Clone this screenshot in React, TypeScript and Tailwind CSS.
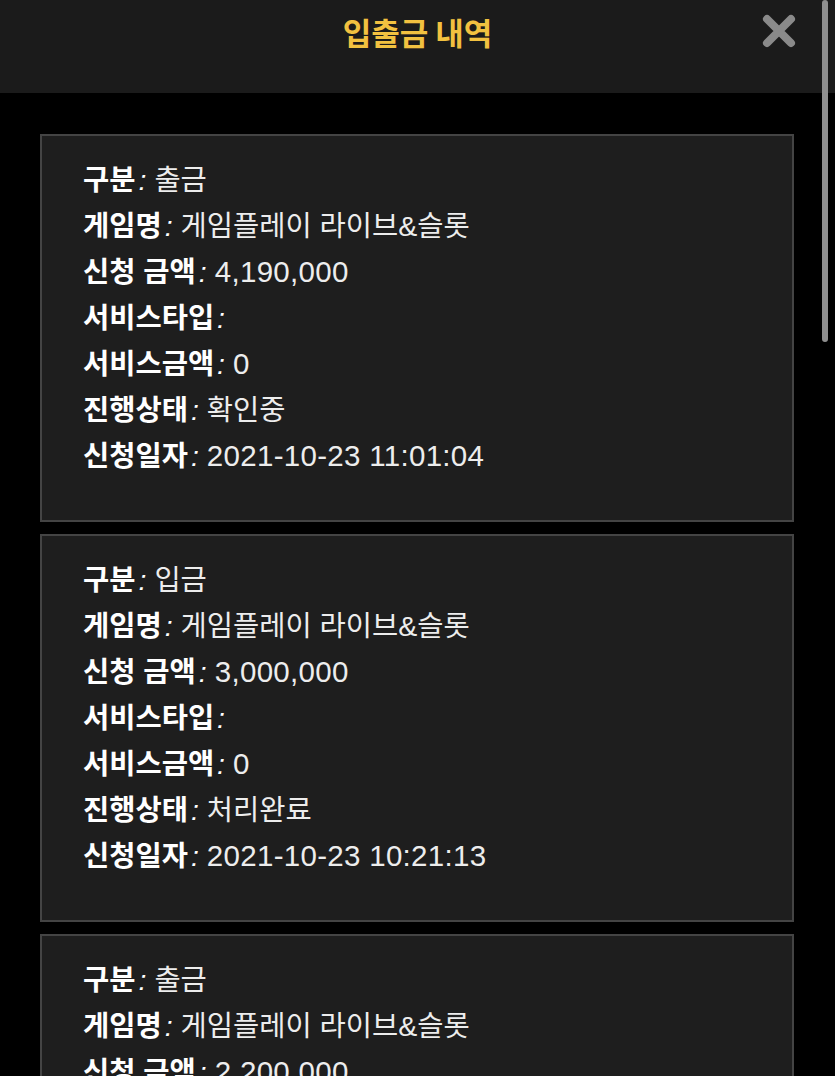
import React from "react";

interface Record {
  kind: string;
  game: string;
  amount: string;
  serviceType: string;
  serviceAmount: string;
  status: string;
  date: string;
}

const records: Record[] = [
  {
    kind: "출금",
    game: "게임플레이 라이브&슬롯",
    amount: "4,190,000",
    serviceType: "",
    serviceAmount: "0",
    status: "확인중",
    date: "2021-10-23 11:01:04",
  },
  {
    kind: "입금",
    game: "게임플레이 라이브&슬롯",
    amount: "3,000,000",
    serviceType: "",
    serviceAmount: "0",
    status: "처리완료",
    date: "2021-10-23 10:21:13",
  },
  {
    kind: "출금",
    game: "게임플레이 라이브&슬롯",
    amount: "2,200,000",
    serviceType: "",
    serviceAmount: "0",
    status: "처리완료",
    date: "2021-10-23 09:12:40",
  },
];

const Row: React.FC<{ label: string; value: string; num?: boolean }> = ({
  label,
  value,
  num,
}) => (
  <div className="h-[46px] flex items-center whitespace-nowrap">
    <span className="font-bold text-white">{label}</span>
    <span className="italic text-white ml-[3px] mr-[8px]">:</span>
    <span className={num ? "text-[#ededed] text-[29.5px] tracking-[0.3px]" : "text-[#ededed]"}>
      {value}
    </span>
  </div>
);

const RecordCard: React.FC<{ r: Record }> = ({ r }) => (
  <div className="bg-[#1e1e1e] border-2 border-[#444] pl-[41px] pt-[21px] pb-[41px]">
    <Row label="구분" value={r.kind} />
    <Row label="게임명" value={r.game} />
    <Row label="신청 금액" value={r.amount} num />
    <Row label="서비스타입" value={r.serviceType} />
    <Row label="서비스금액" value={r.serviceAmount} num />
    <Row label="진행상태" value={r.status} />
    <Row label="신청일자" value={r.date} num />
  </div>
);

export default function App() {
  return (
    <div
      className="relative w-[835px] h-[1076px] overflow-hidden bg-black text-[28.5px]"
      style={{ fontFamily: '"Liberation Sans", "Noto Sans CJK KR", sans-serif' }}
    >
      {/* Header */}
      <div className="relative h-[93px] bg-[#1b1b1b] flex justify-center pt-[10px]">
        <h1
          className="text-[31px] font-bold text-[#f2c140] leading-[44px]"
          style={{ fontFamily: '"Noto Sans CJK KR", sans-serif' }}
        >
          입출금 내역
        </h1>
        <button className="absolute right-[38px] top-[13px] w-[36px] h-[36px]">
          <svg viewBox="0 0 36 36" className="w-full h-full">
            <path
              d="M6 6 L30 30 M30 6 L6 30"
              stroke="#8a8a8a"
              strokeWidth="8"
              strokeLinecap="round"
              fill="none"
            />
          </svg>
        </button>
      </div>

      {/* List */}
      <div className="flex flex-col gap-[12px] pt-[41px] pl-[40px] pr-[41px]">
        {records.map((r, i) => (
          <RecordCard key={i} r={r} />
        ))}
      </div>

      {/* Scrollbar */}
      <div className="absolute right-[7px] top-0 w-[6px] h-[342px] rounded-full bg-[#8f8f8f]" />
    </div>
  );
}
